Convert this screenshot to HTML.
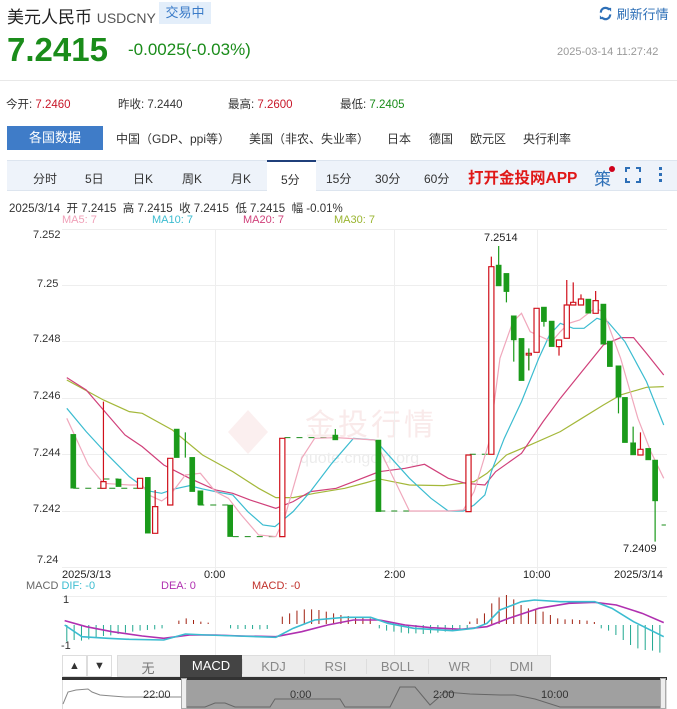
<!DOCTYPE html>
<html><head><meta charset="utf-8"><style>
*{margin:0;padding:0;box-sizing:border-box}
body{width:677px;height:709px;background:#fff;font-family:"Liberation Sans","Noto Sans CJK SC",sans-serif;position:relative;overflow:hidden;color:#333}
.a{position:absolute;white-space:nowrap}
</style></head><body>
<div class="a" style="left:7px;top:3px;font-size:17px;color:#222">美元人民币 <span style="font-size:14px;color:#555">USDCNY</span></div>
<div class="a" style="left:159px;top:2px;width:52px;height:22px;background:#e3eefa;color:#3a7bc8;font-size:13px;line-height:22px;text-align:center">交易中</div>
<div class="a" style="left:598px;top:4px;font-size:13px;color:#2d6fb7"><svg width="15" height="15" viewBox="0 0 16 16" style="vertical-align:-2px"><path d="M3 7a5 5 0 0 1 9-3" stroke="#2d6fb7" stroke-width="2.4" fill="none"/><path d="M13 9a5 5 0 0 1-9 3" stroke="#2d6fb7" stroke-width="2.4" fill="none"/><path d="M10 2l4 0l0 4z" fill="#2d6fb7"/><path d="M6 14l-4 0l0-4z" fill="#2d6fb7"/></svg> 刷新行情</div>
<div class="a" style="left:7px;top:31px;font-size:33px;font-weight:bold;color:#1a8c1a">7.2415</div>
<div class="a" style="left:128px;top:40px;font-size:17px;color:#1a8c1a">-0.0025(-0.03%)</div>
<div class="a" style="left:557px;top:46px;font-size:11px;color:#999">2025-03-14 11:27:42</div>
<div class="a" style="left:0;top:80px;width:677px;height:1px;background:#e8e8e8"></div>
<div class="a" style="left:6px;top:96px;font-size:11.5px;color:#333">今开: <span style="color:#c8182a">7.2460</span></div>
<div class="a" style="left:118px;top:96px;font-size:11.5px;color:#333">昨收: 7.2440</div>
<div class="a" style="left:228px;top:96px;font-size:11.5px;color:#333">最高: <span style="color:#c8182a">7.2600</span></div>
<div class="a" style="left:340px;top:96px;font-size:11.5px;color:#333">最低: <span style="color:#1a8c1a">7.2405</span></div>
<div class="a" style="left:7px;top:126px;width:96px;height:24px;background:#3f7cc8;color:#fff;font-size:13px;line-height:24px;text-align:center">各国数据</div>
<div class="a" style="left:116px;top:130px;font-size:12px;color:#333">中国（GDP、ppi等）</div>
<div class="a" style="left:249px;top:130px;font-size:12px;color:#333">美国（非农、失业率）</div>
<div class="a" style="left:387px;top:130px;font-size:12px;color:#333">日本</div>
<div class="a" style="left:429px;top:130px;font-size:12px;color:#333">德国</div>
<div class="a" style="left:470px;top:130px;font-size:12px;color:#333">欧元区</div>
<div class="a" style="left:523px;top:130px;font-size:12px;color:#333">央行利率</div>
<div class="a" style="left:7px;top:160px;width:670px;height:31px;background:#eef3fa;border-top:1px solid #dde5ef;border-bottom:1px solid #dde5ef"></div>
<div class="a" style="left:267px;top:160px;width:49px;height:32px;background:#fff;border-top:2px solid #1f3f7a"></div>
<div class="a" style="top:170px;left:33px;font-size:12px;color:#333">分时</div>
<div class="a" style="top:170px;left:85px;font-size:12px;color:#333">5日</div>
<div class="a" style="top:170px;left:133px;font-size:12px;color:#333">日K</div>
<div class="a" style="top:170px;left:182px;font-size:12px;color:#333">周K</div>
<div class="a" style="top:170px;left:231px;font-size:12px;color:#333">月K</div>
<div class="a" style="top:171px;left:281px;font-size:12px;color:#333">5分</div>
<div class="a" style="top:170px;left:326px;font-size:12px;color:#333">15分</div>
<div class="a" style="top:170px;left:375px;font-size:12px;color:#333">30分</div>
<div class="a" style="top:170px;left:424px;font-size:12px;color:#333">60分</div>
<div class="a" style="top:166px;left:468px;font-size:15.5px;font-weight:bold;color:#e01818">打开金投网APP</div>
<div class="a" style="top:165px;left:594px;font-size:17px;color:#2d6fb7">策</div>
<div class="a" style="top:166px;left:609px;width:6px;height:6px;border-radius:50%;background:#d0021b"></div>
<svg class="a" style="left:625px;top:167px" width="16" height="16" viewBox="0 0 16 16" fill="none" stroke="#2d6fb7" stroke-width="2"><path d="M1 5V1h4M11 1h4v4M15 11v4h-4M5 15H1v-4"/></svg>
<div class="a" style="top:167px;left:659px;width:3px;height:3px;background:#2d6fb7;box-shadow:0 6px 0 #2d6fb7,0 12px 0 #2d6fb7"></div>
<div class="a" style="left:9px;top:200px;font-size:11.5px;color:#333">2025/3/14 &nbsp;开 7.2415 &nbsp;高 7.2415 &nbsp;收 7.2415 &nbsp;低 7.2415 &nbsp;幅 -0.01%</div>
<div class="a" style="left:62px;top:214px;font-size:11px;color:#f0a0b8">MA5: 7</div>
<div class="a" style="left:152px;top:214px;font-size:11px;color:#3bbcd0">MA10: 7</div>
<div class="a" style="left:243px;top:214px;font-size:11px;color:#d0407a">MA20: 7</div>
<div class="a" style="left:334px;top:214px;font-size:11px;color:#9ab530">MA30: 7</div>
<div class="a" style="left:33px;top:229px;font-size:11px;color:#333">7.252</div>
<div class="a" style="left:37px;top:278px;font-size:11px;color:#333">7.25</div>
<div class="a" style="left:33px;top:333px;font-size:11px;color:#333">7.248</div>
<div class="a" style="left:33px;top:390px;font-size:11px;color:#333">7.246</div>
<div class="a" style="left:33px;top:447px;font-size:11px;color:#333">7.244</div>
<div class="a" style="left:33px;top:503px;font-size:11px;color:#333">7.242</div>
<div class="a" style="left:37px;top:554px;font-size:11px;color:#333">7.24</div>
<div class="a" style="left:484px;top:232px;font-size:11px;color:#222">7.2514</div>
<div class="a" style="left:623px;top:543px;font-size:11px;color:#222">7.2409</div>
<div class="a" style="left:305px;top:400px;font-size:30px;color:rgba(220,140,140,.18);letter-spacing:3px">金投行情</div>
<div class="a" style="left:300px;top:450px;font-size:16px;color:rgba(160,160,160,.2)">quote.cngold.org</div>
<svg class="a" style="left:0;top:0" width="677" height="709">
<g stroke="#eee" stroke-width="1">
<line x1="62" y1="229.5" x2="667" y2="229.5"/><line x1="62" y1="285.5" x2="667" y2="285.5"/><line x1="62" y1="341.5" x2="667" y2="341.5"/><line x1="62" y1="398.5" x2="667" y2="398.5"/><line x1="62" y1="454.5" x2="667" y2="454.5"/><line x1="62" y1="511.5" x2="667" y2="511.5"/><line x1="62" y1="567.5" x2="667" y2="567.5"/>
<line x1="215.5" y1="229" x2="215.5" y2="655"/><line x1="394.5" y1="229" x2="394.5" y2="655"/><line x1="537.5" y1="229" x2="537.5" y2="655"/>
<line x1="62" y1="596.5" x2="667" y2="596.5"/>
</g>
<path d="M228 432l20-22 20 22-20 22z" fill="rgba(220,120,120,.12)"/>
<g transform="translate(0,225) scale(0.431,0.3333)" fill="none" stroke-width="1.2">
<g stroke="#1a8c1a" stroke-dasharray="6 6" stroke-width="1" vector-effect="non-scaling-stroke"><path d="M170 790H340M460 840H530M540 935H640M660 638H780M880 858H950M1090 688H1135M1535 900H1545M240 762H275" vector-effect="non-scaling-stroke"/></g>
<polyline vector-effect="non-scaling-stroke" stroke="#a4b83a" points="155,465 240,525 300,560 330,565 400,615 470,690 540,740 600,790 640,818 680,818 730,805 800,790 850,773 880,762 950,780 1030,782 1100,770 1130,745 1175,690 1230,660 1300,620 1350,580 1400,540 1440,510 1500,487 1540,485"/>
<polyline vector-effect="non-scaling-stroke" stroke="#d0407a" points="155,458 200,495 250,570 290,630 330,665 380,720 440,760 500,795 540,805 580,825 640,850 680,830 720,800 780,790 820,770 880,740 940,730 985,718 1040,760 1080,775 1125,780 1150,740 1210,685 1260,590 1300,520 1350,440 1400,360 1440,338 1470,338 1500,385 1540,450"/>
<polyline vector-effect="non-scaling-stroke" stroke="#3bbcd0" points="155,550 200,620 250,690 300,755 345,798 375,805 405,792 440,782 470,792 500,800 540,810 575,860 610,900 638,905 680,860 720,800 770,715 820,640 870,645 950,760 1000,820 1040,858 1075,858 1100,840 1125,810 1140,740 1170,640 1210,530 1250,400 1275,330 1300,295 1330,310 1355,310 1385,280 1410,290 1450,350 1500,470 1540,600"/>
<polyline vector-effect="non-scaling-stroke" stroke="#f0a8bc" points="155,580 205,720 240,775 300,780 330,780 345,810 375,828 395,810 430,750 465,745 500,800 530,820 560,870 600,930 640,935 660,880 700,700 730,640 780,638 870,645 950,858 1040,858 1075,855 1100,800 1135,650 1160,400 1190,290 1210,265 1230,320 1280,350 1300,320 1320,295 1345,285 1380,250 1400,260 1440,400 1480,580 1510,680 1540,760"/>
<g stroke="#d0101b" vector-effect="non-scaling-stroke" fill="#fff">
<path vector-effect="non-scaling-stroke" d="M240 530V770M360 795V845M1140 95V125M1227 436V385M1297 392V365M1315 165V240M1330 172V232M1348 208V222M1382 198V227M1486 622V673"/>
<rect vector-effect="non-scaling-stroke" x="234" y="770" width="12" height="20"/><rect vector-effect="non-scaling-stroke" x="319" y="760" width="12" height="30"/><rect vector-effect="non-scaling-stroke" x="354" y="845" width="12" height="80"/><rect vector-effect="non-scaling-stroke" x="389" y="700" width="12" height="140"/><rect vector-effect="non-scaling-stroke" x="649" y="640" width="12" height="295"/><rect vector-effect="non-scaling-stroke" x="1081" y="690" width="12" height="170"/><rect vector-effect="non-scaling-stroke" x="1134" y="125" width="12" height="563"/><rect vector-effect="non-scaling-stroke" x="1221" y="385" width="12" height="5"/><rect vector-effect="non-scaling-stroke" x="1239" y="250" width="12" height="132"/><rect vector-effect="non-scaling-stroke" x="1291" y="345" width="12" height="20"/><rect vector-effect="non-scaling-stroke" x="1309" y="240" width="12" height="100"/><rect vector-effect="non-scaling-stroke" x="1324" y="232" width="12" height="8"/><rect vector-effect="non-scaling-stroke" x="1342" y="222" width="12" height="18"/><rect vector-effect="non-scaling-stroke" x="1376" y="227" width="12" height="38"/><rect vector-effect="non-scaling-stroke" x="1480" y="673" width="12" height="17"/>
</g>
<g fill="#1a9a1a" stroke="#1a9a1a">
<path vector-effect="non-scaling-stroke" d="M430 622V698M1157 63V120M1175 200V232M1192 345V410M1227 370V436M1262 290V305M1435 517V565M1469 605V653M1520 828V950M778 612V630"/>
<rect x="164" y="628" width="12" height="162"/><rect x="269" y="762" width="12" height="23"/><rect x="337" y="757" width="12" height="168"/><rect x="404" y="612" width="12" height="86"/><rect x="440" y="697" width="12" height="103"/><rect x="459" y="797" width="12" height="43"/><rect x="528" y="840" width="12" height="95"/><rect x="772" y="630" width="12" height="15"/><rect x="872" y="645" width="12" height="215"/><rect x="1151" y="120" width="12" height="63"/><rect x="1169" y="145" width="12" height="55"/><rect x="1186" y="272" width="12" height="73"/><rect x="1204" y="340" width="12" height="127"/><rect x="1256" y="246" width="12" height="44"/><rect x="1274" y="288" width="12" height="77"/><rect x="1359" y="222" width="12" height="43"/><rect x="1394" y="237" width="12" height="121"/><rect x="1409" y="348" width="12" height="77"/><rect x="1429" y="422" width="12" height="95"/><rect x="1444" y="517" width="12" height="136"/><rect x="1463" y="653" width="12" height="37"/><rect x="1498" y="670" width="12" height="35"/><rect x="1514" y="705" width="12" height="123"/>
</g>
</g>
<g transform="translate(0,560) scale(0.431,0.3333)" fill="none">
<path vector-effect="non-scaling-stroke" stroke="#20a890" d="M155 195V245M172 195V240M189 195V242M206 195V238M223 195V232M240 195V228M257 195V226M274 195V222M291 195V218M308 195V215M325 195V212M342 195V210M359 195V208M376 195V205M535 195V205M552 195V207M569 195V207M586 195V207M603 195V208M620 195V207M880 195V205M897 195V212M914 195V215M931 195V218M948 195V220M965 195V220M982 195V222M999 195V220M1016 195V218M1033 195V215M1050 195V212M1067 195V210M1084 195V205M1395 195V205M1412 195V212M1429 195V225M1446 195V240M1463 195V255M1480 195V265M1497 195V270M1514 195V272M1531 195V278"/>
<path vector-effect="non-scaling-stroke" stroke="#a02010" d="M415 192V182M432 192V175M449 192V180M466 192V185M483 192V188M655 192V170M672 192V160M689 192V152M706 192V148M723 192V148M740 192V150M757 192V155M774 192V160M791 192V165M808 192V168M825 192V170M842 192V172M859 192V175M1090 192V185M1107 192V175M1124 192V160M1141 192V130M1158 192V112M1175 192V105M1192 192V118M1209 192V135M1226 192V145M1243 192V150M1260 192V155M1277 192V165M1294 192V175M1311 192V178M1328 192V178M1345 192V180M1362 192V182M1379 192V186"/>
<polyline vector-effect="non-scaling-stroke" stroke="#b030b0" stroke-width="1.6" points="150,182 200,200 260,215 330,228 380,235 440,225 500,225 560,228 640,230 700,215 760,195 820,180 880,180 940,195 1000,203 1070,208 1130,200 1180,175 1250,145 1320,130 1380,127 1430,135 1490,160 1540,188"/>
<polyline vector-effect="non-scaling-stroke" stroke="#3bbcd0" stroke-width="1.6" points="150,195 190,230 250,235 300,238 380,240 430,222 480,225 550,228 640,232 680,205 730,180 800,172 860,172 900,190 960,205 1050,212 1100,205 1130,190 1160,150 1210,125 1240,120 1300,125 1380,125 1420,145 1470,185 1540,230"/>
</g>
</svg>
<div class="a" style="left:62px;top:569px;font-size:11px;color:#222">2025/3/13</div>
<div class="a" style="left:204px;top:569px;font-size:11px;color:#222">0:00</div>
<div class="a" style="left:384px;top:569px;font-size:11px;color:#222">2:00</div>
<div class="a" style="left:523px;top:569px;font-size:11px;color:#222">10:00</div>
<div class="a" style="left:614px;top:569px;font-size:11px;color:#222">2025/3/14</div>
<div class="a" style="left:26px;top:580px;font-size:11px;color:#666">MACD <span style="color:#3bbcd0">DIF: -0</span></div>
<div class="a" style="left:161px;top:580px;font-size:11px;color:#b030b0">DEA: 0</div>
<div class="a" style="left:252px;top:580px;font-size:11px;color:#c0302a">MACD: -0</div>
<div class="a" style="left:63px;top:594px;font-size:11px;color:#333">1</div>
<div class="a" style="left:61px;top:640px;font-size:11px;color:#333">-1</div>
<div class="a" style="left:62px;top:655px;width:25px;height:22px;border:1px solid #ddd;font-size:11px;text-align:center;line-height:20px">▲</div>
<div class="a" style="left:87px;top:655px;width:25px;height:22px;border:1px solid #ddd;font-size:11px;text-align:center;line-height:20px">▼</div>
<div class="a" style="left:117px;top:655px;width:434px;height:22px;background:#ececec;border:1px solid #ddd"></div>
<div class="a" style="left:117px;top:658px;width:62px;text-align:center;font-size:13px;color:#777">无</div>
<div class="a" style="left:180px;top:655px;width:62px;height:22px;background:#444;color:#fff;font-size:13px;line-height:22px;text-align:center">MACD</div>
<div class="a" style="left:242px;top:659px;width:62px;text-align:center;font-size:13px;color:#888;border-left:1px solid #ddd">KDJ</div>
<div class="a" style="left:304px;top:659px;width:62px;text-align:center;font-size:13px;color:#888;border-left:1px solid #ddd">RSI</div>
<div class="a" style="left:366px;top:659px;width:62px;text-align:center;font-size:13px;color:#888;border-left:1px solid #ddd">BOLL</div>
<div class="a" style="left:428px;top:659px;width:62px;text-align:center;font-size:13px;color:#888;border-left:1px solid #ddd">WR</div>
<div class="a" style="left:490px;top:659px;width:62px;text-align:center;font-size:13px;color:#888;border-left:1px solid #ddd">DMI</div>
<div class="a" style="left:62px;top:677px;width:605px;height:3px;background:#333"></div>
<div class="a" style="left:62px;top:680px;width:605px;height:29px;border-left:1px solid #ddd;border-right:1px solid #ddd"></div>
<div class="a" style="left:187px;top:680px;width:473px;height:29px;background:#a0a0a0"></div>
<div class="a" style="left:181px;top:678px;width:6px;height:31px;background:#eee;border:1px solid #aaa"></div>
<div class="a" style="left:660px;top:678px;width:6px;height:31px;background:#eee;border:1px solid #aaa"></div>
<svg class="a" style="left:0;top:677px" width="677" height="32"><polyline fill="none" stroke="#888" points="63,27 68,15 76,13 88,12 92,15 100,18 112,19 125,20 170,20 181,20" /><polyline fill="none" stroke="#666" points="187,30 205,30 215,26 225,26 235,30 270,30 275,22 340,22 345,30 390,30 400,10 415,10 430,28 445,15 470,17 500,18 515,18 535,22 560,30 660,30"/></svg>
<div class="a" style="left:143px;top:689px;font-size:11px;color:#333">22:00</div>
<div class="a" style="left:290px;top:689px;font-size:11px;color:#333">0:00</div>
<div class="a" style="left:433px;top:689px;font-size:11px;color:#333">2:00</div>
<div class="a" style="left:541px;top:689px;font-size:11px;color:#333">10:00</div>
</body></html>
